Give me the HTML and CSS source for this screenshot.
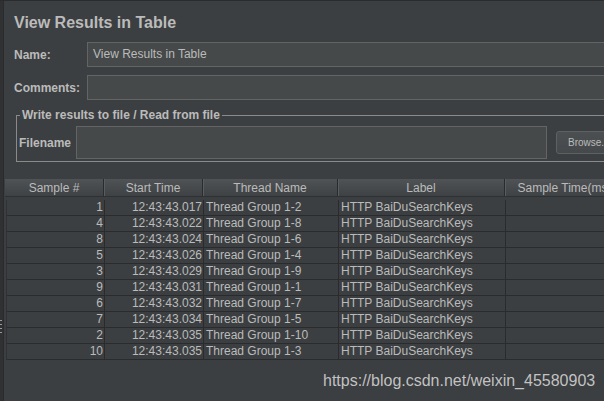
FILE: index.html
```html
<!DOCTYPE html>
<html>
<head>
<meta charset="utf-8">
<link rel="stylesheet" href="styles.css">
</head>
<body>
<div class="app">
  <div class="strip">
    <div class="grip"><i></i><i></i><i></i><i></i></div>
  </div>
  <div class="main">
    <div class="title">View Results in Table</div>
    <div class="frow">
      <div class="flabel">Name:</div>
      <div class="field">View Results in Table</div>
    </div>
    <div class="frow">
      <div class="flabel">Comments:</div>
      <div class="field"></div>
    </div>
    <fieldset class="fileset">
      <legend>Write results to file / Read from file</legend>
      <div class="filerow">
        <div class="fname">Filename</div>
        <div class="field filefield"></div>
        <div class="browse">Browse...</div>
      </div>
    </fieldset>
    <div class="table">
      <div class="thead">
        <div class="th c1">Sample #</div>
        <div class="th c2">Start Time</div>
        <div class="th c3">Thread Name</div>
        <div class="th c4">Label</div>
        <div class="th c5">Sample Time(ms)</div>
      </div>
      <div class="tbody">
        <div class="tr"><div class="td c1 r">1</div><div class="td c2 r">12:43:43.017</div><div class="td c3">Thread Group 1-2</div><div class="td c4">HTTP BaiDuSearchKeys</div><div class="td c5"></div></div>
        <div class="tr"><div class="td c1 r">4</div><div class="td c2 r">12:43:43.022</div><div class="td c3">Thread Group 1-8</div><div class="td c4">HTTP BaiDuSearchKeys</div><div class="td c5"></div></div>
        <div class="tr"><div class="td c1 r">8</div><div class="td c2 r">12:43:43.024</div><div class="td c3">Thread Group 1-6</div><div class="td c4">HTTP BaiDuSearchKeys</div><div class="td c5"></div></div>
        <div class="tr"><div class="td c1 r">5</div><div class="td c2 r">12:43:43.026</div><div class="td c3">Thread Group 1-4</div><div class="td c4">HTTP BaiDuSearchKeys</div><div class="td c5"></div></div>
        <div class="tr"><div class="td c1 r">3</div><div class="td c2 r">12:43:43.029</div><div class="td c3">Thread Group 1-9</div><div class="td c4">HTTP BaiDuSearchKeys</div><div class="td c5"></div></div>
        <div class="tr"><div class="td c1 r">9</div><div class="td c2 r">12:43:43.031</div><div class="td c3">Thread Group 1-1</div><div class="td c4">HTTP BaiDuSearchKeys</div><div class="td c5"></div></div>
        <div class="tr"><div class="td c1 r">6</div><div class="td c2 r">12:43:43.032</div><div class="td c3">Thread Group 1-7</div><div class="td c4">HTTP BaiDuSearchKeys</div><div class="td c5"></div></div>
        <div class="tr"><div class="td c1 r">7</div><div class="td c2 r">12:43:43.034</div><div class="td c3">Thread Group 1-5</div><div class="td c4">HTTP BaiDuSearchKeys</div><div class="td c5"></div></div>
        <div class="tr"><div class="td c1 r">2</div><div class="td c2 r">12:43:43.035</div><div class="td c3">Thread Group 1-10</div><div class="td c4">HTTP BaiDuSearchKeys</div><div class="td c5"></div></div>
        <div class="tr"><div class="td c1 r">10</div><div class="td c2 r">12:43:43.035</div><div class="td c3">Thread Group 1-3</div><div class="td c4">HTTP BaiDuSearchKeys</div><div class="td c5"></div></div>
      </div>
    </div>
  </div>
  <div class="watermark">https://blog.csdn.net/weixin_45580903</div>
</div>
</body>
</html>
```

FILE: styles.css
```css
* { box-sizing: border-box; }
html, body {
  margin: 0;
  padding: 0;
  width: 604px;
  height: 401px;
  overflow: hidden;
  background: #3c3f41;
}
body {
  font-family: "Liberation Sans", Arial, sans-serif;
  font-size: 12px;
  color: #bbbbbb;
}
.app {
  position: relative;
  display: flex;
  width: 604px;
  height: 401px;
  border-top: 1px solid #2b2b2b;
  overflow: hidden;
}
.strip {
  width: 4px;
  flex: none;
  background: #2f3133;
  border-right: 1px solid #292b2d;
  display: flex;
  flex-direction: column;
  justify-content: flex-start;
  padding-top: 319px;
}
.grip {
  display: flex;
  flex-direction: column;
  gap: 3px;
}
.grip i {
  display: block;
  width: 2px;
  height: 1px;
  background: #9a9a9a;
}
.main {
  flex: 1;
  min-width: 0;
  padding-left: 10px;
}
.title {
  margin-top: 12px;
  font-size: 16px;
  font-weight: bold;
  line-height: 20px;
  height: 20px;
}
.frow {
  display: flex;
  align-items: center;
  margin-right: -40px;
  margin-top: 9px;
}
.frow + .frow { margin-top: 8px; }
.flabel {
  width: 73px;
  flex: none;
  font-weight: bold;
}
.field {
  flex: 1;
  height: 25px;
  background: #45494a;
  border: 1px solid #646464;
  padding-left: 5px;
  line-height: 23px;
}
.fileset {
  margin: 8px -40px 0 2px;
  padding: 0 0 2px 2px;
  border: 1px solid #8a8a8a;
  min-width: 0;
}
.fileset legend {
  font-weight: bold;
  padding: 0 2px;
  margin-left: 1px;
  line-height: 14px;
}
.filerow {
  display: flex;
  align-items: center;
  margin-top: 4px;
}
.fname {
  width: 57px;
  flex: none;
  font-weight: bold;
}
.filefield {
  flex: none;
  width: 471px;
  height: 33px;
}
.browse {
  flex: none;
  margin-left: 9px;
  height: 23px;
  width: 70px;
  border: 1px solid #5e6162;
  border-radius: 3px;
  background: linear-gradient(#4b4f51, #45494b);
  font-size: 10px;
  line-height: 21px;
  padding-left: 11px;
  color: #bbbbbb;
}
.table {
  margin: 17px 0 0 -9px;
}
.thead {
  display: flex;
  height: 18px;
  background: linear-gradient(#505355, #3f4244);
  border-bottom: 1px solid #2e3032;
}
.th {
  text-align: center;
  line-height: 18px;
  border-right: 1px solid #2b2b2b;
  box-shadow: inset 1px 0 0 #5a5d5f;
  white-space: nowrap;
  overflow: hidden;
}
.th.c1 { box-shadow: none; }
.c1 { width: 99px; flex: none; }
.c2 { width: 99px; flex: none; }
.c3 { width: 135px; flex: none; }
.c4 { width: 167px; flex: none; }
.c5 { width: 120px; flex: none; }
.tbody {
  margin-top: 3px;
  margin-left: 1px;
  border-left: 1px solid #2f3133;
}
.tr {
  display: flex;
  height: 16px;
  border-bottom: 1px solid #2b2b2b;
}
.td {
  line-height: 14px;
  white-space: nowrap;
  overflow: hidden;
  border-right: 1px solid #2b2b2b;
  padding-left: 2px;
}
.tr .c1 { width: 98px; }
.tr .c2 { width: 99px; }
.tr .c3 { width: 135px; }
.tr .c4 { width: 167px; }
.td.r { text-align: right; padding-right: 1px; }
.watermark {
  position: absolute;
  left: 323px;
  top: 370px;
  font-size: 16px;
  line-height: 20px;
  color: rgba(220, 220, 220, 0.85);
  white-space: nowrap;
}
```
